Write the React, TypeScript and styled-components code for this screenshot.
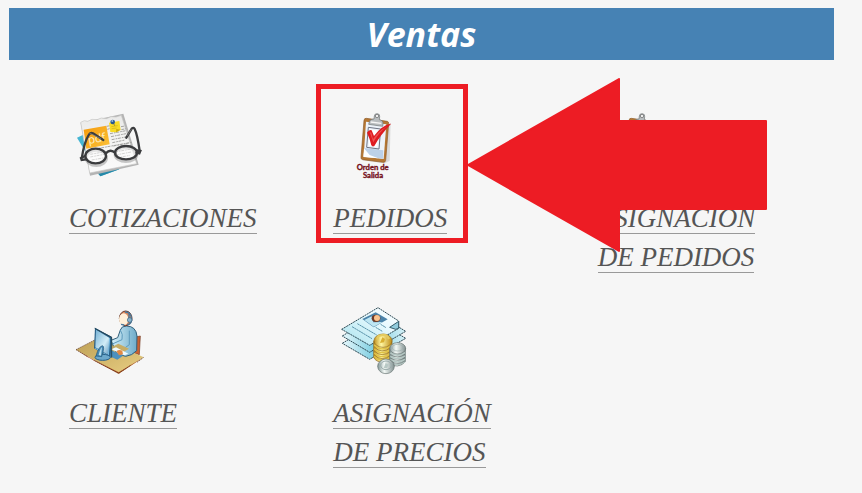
import React from "react";
import styled, { createGlobalStyle } from "styled-components";

const GlobalStyle = createGlobalStyle`
  body {
    margin: 0;
    background: #f6f6f6;
  }
`;

const Page = styled.main`
  padding: 8px 28px 16px 9px;
`;

const Banner = styled.h1`
  margin: 0;
  background: #4682b4;
  color: #fff;
  font: italic bold 34px/52px "Trebuchet MS", "Open Sans", sans-serif;
  text-align: center;
`;

const Menu = styled.nav`
  display: grid;
  grid-template-columns: repeat(3, minmax(0, 1fr));
  gap: 26px 72px;
  padding: 48px 44px 0 60px;
`;

const Item = styled.div<{ $raised?: boolean }>`
  position: relative;
  z-index: ${(p) => (p.$raised ? 1 : 0)};
`;

const Picture = styled.svg`
  display: block;
  width: 80px;
  height: 72px;
  margin-bottom: 19px;
`;

const MenuLink = styled.a`
  color: #555;
  font: italic 27px/39px Georgia, "Liberation Serif", serif;
  text-decoration: none;
  border-bottom: 1px solid #999;
`;

const Frame = styled.div`
  position: absolute;
  top: -24px;
  left: -17px;
  box-sizing: border-box;
  width: 152px;
  height: 159px;
  border: 5px solid #ed1c24;
  pointer-events: none;
`;

const Arrow = styled.svg`
  position: absolute;
  top: -30px;
  left: 134px;
  width: 300px;
  height: 174px;
  pointer-events: none;
`;

function QuoteIcon() {
  return (
    <Picture viewBox="27 24 240 216" aria-hidden="true">
      <defs>
        <linearGradient id="note" x1="0" y1="0" x2="1" y2="1">
          <stop offset="0" stopColor="#f59a0b" />
          <stop offset="1" stopColor="#fbc23a" />
        </linearGradient>
        <linearGradient id="sheet" x1="0" y1="0" x2="0" y2="1">
          <stop offset="0" stopColor="#e9e9e8" />
          <stop offset="0.4" stopColor="#f3f3f2" />
          <stop offset="1" stopColor="#fbfbfb" />
        </linearGradient>
      </defs>
      <path d="M51 113l17-8 110 103-57 21z" fill="#45b5d3" />
      <path d="M121 229l57-21-40-3-29 10z" fill="#2588a8" />
      <path d="M62 69l128-28 46 153-146 33z" fill="#b4b4b4" />
      <path d="M62 67l11-5 10 2 13-6 15 1 13-5 15 2 14-6 15 1 16-5 46 145-141 28z" fill="url(#sheet)" stroke="#c6c6c4" strokeWidth="2" />
      <g stroke="#a4a4a2" strokeWidth="3" strokeDasharray="9 3 5 2">
        <path d="M140 79l10-2M142 88l7-2M183 80l12-2M184 89l14-3M150 101l48-9M153 110l45-9M155 119l47-9M157 128l38-8M160 138l47-9M105 147l110-20M91 163l50-9M91 171l47-9M95 180l40-7M165 156l48-9M167 165l47-9M170 174l39-8" />
      </g>
      <path d="M71 89l68-12 10 56-70 13z" fill="url(#note)" />
      <text x="86" y="132" transform="rotate(-10 86 132)" fill="#fff3cc" fontFamily="Open Sans, sans-serif" fontSize="34">pdf</text>
      <path d="M147 68l31-5 4 27-13 7-18-1z" fill="#f8dc24" />
      <path d="M181 89l-13 8 1-10z" fill="#c9a710" />
      <path d="M154 80l19-3M155 86l15-2" stroke="#cfae17" strokeWidth="2" />
      <circle cx="158" cy="66" r="7" fill="#265892" />
      <circle cx="157" cy="63" r="3" fill="#92b9db" />
      <path d="M161 71l3 6" stroke="#555" strokeWidth="2" />
      <g fill="none" stroke="#77777766" strokeWidth="8">
        <ellipse cx="109" cy="174" rx="31" ry="23" />
        <ellipse cx="198" cy="164" rx="33" ry="21" />
      </g>
      <g fill="#ffffff88" stroke="#3b3c3e" strokeWidth="7" strokeLinecap="round">
        <ellipse cx="107" cy="168" rx="31" ry="22" />
        <ellipse cx="198" cy="158" rx="33" ry="20" />
        <path d="M138 160q13-15 28-1M75 168l-12 6 2 6 13-2M230 151l11 2-3 7-9-2" fill="none" />
        <path d="M66 171q6-42 20-66 4-8 13-5l31 20M239 153q-7-50-15-66-3-6-9-1l-16 27" fill="none" />
      </g>
      <path d="M88 99l35 17M214 88l-13 20" stroke="#8a8a8a" strokeWidth="2" />
    </Picture>
  );
}

function OrderIcon() {
  return (
    <Picture viewBox="10 24 240 216" aria-hidden="true">
      <path d="M99 181l66 9 15-8 2-85 1-29-65 76z" fill="#bdbdbd" opacity="0.5" />
      <path d="M110 55l63 9q4 1 4 6l-9 111q-1 7-8 6l-61-8q-6-1-5-7l9-111q1-7 7-6z" fill="#b47734" stroke="#8e5b28" strokeWidth="2" />
      <path d="M109 65l61 8-8 104-60-7z" fill="#edf3fa" />
      <path d="M104 144l57 7-1 25-58-7z" fill="#bcd1e9" />
      <path d="M101 171l2-26 17 20 26 10z" fill="#fff" />
      <path d="M116 82l37 5-5 60-37-5z" fill="none" stroke="#6d7483" strokeWidth="3" />
      <path d="M121 88l26 4-4 48-26-3z" fill="#fff" />
      <path d="M119 66q2-10 14-9l1-9q1-8 9-7 8 1 7 9l-1 9q12 2 11 13l-1 7-42-6z" fill="#b8bcbe" stroke="#6d7274" strokeWidth="2" />
      <circle cx="142" cy="48" r="5" fill="#eee" stroke="#666" strokeWidth="2" />
      <path d="M123 66l32 4" stroke="#f6f6f6" strokeWidth="4" />
      <path d="M112 98q6-10 14-7l7 17q22-31 49-37 3 0 1 2-30 31-49 65-6 3-9-2-3-17-13-38z" fill="#df1c21" />
      <path d="M120 96l11 31q18-32 42-48-28 15-43 39l-5-20z" fill="#f36868" opacity="0.7" />
      <g fill="#740f19" stroke="#740f19" strokeWidth="1" fontFamily="Lato, sans-serif" fontSize="23" fontWeight="700" textAnchor="middle">
        <text x="129" y="210">Orden de</text>
        <text x="130" y="234">Salida</text>
      </g>
    </Picture>
  );
}

function ClientIcon() {
  return (
    <Picture viewBox="27 24 240 216" aria-hidden="true">
      <defs>
        <linearGradient id="desk" x1="0" y1="0" x2="1" y2="1">
          <stop offset="0" stopColor="#bd9f55" />
          <stop offset="1" stopColor="#e9cf83" />
        </linearGradient>
        <linearGradient id="shirt">
          <stop offset="0" stopColor="#d6f1fa" />
          <stop offset="1" stopColor="#6eabc9" />
        </linearGradient>
        <linearGradient id="screen" x1="0" y1="0" x2="1" y2="1">
          <stop offset="0" stopColor="#75b1d5" />
          <stop offset="0.6" stopColor="#d2edf7" />
          <stop offset="1" stopColor="#5b94bc" />
        </linearGradient>
      </defs>
      <path d="M226 126l15-3-3 56-16-5z" fill="#ca6131" stroke="#713923" strokeWidth="2" />
      <path d="M48 164l73-37 130 60-75 49z" fill="url(#desk)" />
      <path d="M48 164l34 20 8 4 13 8 73 36 75-45-75 49-73-38-13-8-8-4z" fill="#a54a22" />
      <path d="M48 164l34 20M103 196l73 39 37-25M231 202l20-15M48 164l60-31" fill="none" stroke="#5e3725" strokeWidth="2" strokeDasharray="5 2" />
      <path d="M153 136l20-8 8-23q3-12 18-12 29 0 32 30l-1 44q-14 15-33 17l-27-8z" fill="url(#shirt)" stroke="#315f7a" strokeWidth="3" />
      <path d="M181 105q9 13 5 29l-31 14M208 107v42l-18 13" fill="none" stroke="#5d9abc" strokeWidth="3" />
      <path d="M157 155l18-9 32 15-25 15z" fill="#c7ad66" />
      <path d="M151 164l38 18-17 12-30-14z" fill="#4c91be" />
      <path d="M154 163l39 18 12-5-37-19z" fill="#f0fbff" />
      <path d="M169 169q8-7 18-2l2 11-12 3z" fill="#e28944" />
      <ellipse cx="197" cy="70" rx="19" ry="22" fill="#de895b" stroke="#663729" strokeWidth="3" />
      <ellipse cx="191" cy="73" rx="14" ry="18" fill="#fff0d9" />
      <path d="M195 51q20 0 20 25-3 13-14 12M183 88l10 2M207 53v29" fill="none" stroke="#4c799a" strokeWidth="4" />
      <circle cx="209" cy="75" r="7" fill="#89b3cb" stroke="#376281" strokeWidth="2" />
      <path d="M105 98l51 28-5 63-49-29z" fill="#285f87" />
      <path d="M108 104l41 25-4 51-39-23z" fill="url(#screen)" />
      <path d="M104 100l51 27v61" fill="none" stroke="#244555" strokeWidth="3" />
      <path d="M149 130l-4 53-40-24" fill="none" stroke="#79bde3" strokeWidth="3" />
      <ellipse cx="128" cy="187" rx="23" ry="9" fill="#6ca8cb" stroke="#27608a" strokeWidth="3" />
      <path d="M108 183q8-30 20-31 7 2-3 33z" fill="#4387b3" stroke="#245779" strokeWidth="2" />
      <path d="M116 180q4-18 10-24l-3 26z" fill="#b8deed" />
    </Picture>
  );
}

function PricesIcon() {
  return (
    <Picture viewBox="10 24 240 216" aria-hidden="true">
      <defs>
        <linearGradient id="paper" x1="0" y1="1" x2="1" y2="0">
          <stop offset="0" stopColor="#a5e0ec" />
          <stop offset="0.65" stopColor="#e9faff" />
          <stop offset="1" stopColor="#fff" />
        </linearGradient>
        <linearGradient id="under">
          <stop offset="0" stopColor="#e8f8fc" />
          <stop offset="0.5" stopColor="#7ccde0" />
          <stop offset="1" stopColor="#d7f2f8" />
        </linearGradient>
        <linearGradient id="gold">
          <stop offset="0" stopColor="#c09120" />
          <stop offset="0.4" stopColor="#fff7a2" />
          <stop offset="1" stopColor="#bd8c17" />
        </linearGradient>
        <linearGradient id="silver">
          <stop offset="0" stopColor="#829595" />
          <stop offset="0.4" stopColor="#f4faf7" />
          <stop offset="1" stopColor="#829090" />
        </linearGradient>
      </defs>
      <g stroke="#2d4a55" strokeWidth="3" strokeDasharray="6 2">
        <path d="M38 145l107-65 83 50-108 63z" fill="url(#under)" />
        <path d="M38 123l107-65 83 51-108 63z" fill="url(#under)" />
        <path d="M36 103L145 38l62 40v22l-87 51z" fill="url(#paper)" />
      </g>
      <path d="M180 97l27-18v21l-9 3z" fill="#8fcbdc" stroke="#345d6b" strokeWidth="3" />
      <path d="M98 72l40-20 36 21-42 24z" fill="#4b83a9" />
      <path d="M104 75l22-11 5 18 28-1-27 14z" fill="#bee6f3" />
      <ellipse cx="139" cy="70" rx="13" ry="11" fill="#713924" />
      <ellipse cx="142" cy="69" rx="9" ry="9" fill="#fac38d" />
      <g stroke="#5a93aa" strokeWidth="3" strokeDasharray="7 1">
        <path d="M83 86l58 34M67 95l60 36M138 97l20 12M153 88l16 10" />
      </g>
      <g stroke="#91691b" strokeWidth="2" fill="url(#gold)">
        <path d="M132 137v50q6 14 28 15 22-2 27-15v-51" />
        <path d="M134 150q21 23 51 1M134 162q21 22 51 0M134 174q21 22 51 0M134 184q21 22 51 0" fill="none" stroke="#e0c346" strokeWidth="4" />
        <path d="M134 156q21 23 51 1M134 168q21 22 51 0M134 180q21 22 51 0" fill="none" />
        <ellipse cx="160" cy="137" rx="27" ry="20" />
      </g>
      <path d="M144 134q-2-12 10-13 17-5 24 11" fill="none" stroke="#e4cb5f" strokeWidth="7" />
      <path d="M158 127l8 5-3 10-12 2z" fill="#d9af32" />
      <g stroke="#637170" strokeWidth="2" fill="url(#silver)">
        <path d="M180 162v43q8 9 23 8 17-2 24-14v-40" />
        <path d="M182 174q22 14 44-1M182 184q22 14 44-1M182 194q22 14 44-1M184 204q20 11 42-4" fill="none" stroke="#b5c8c4" strokeWidth="4" />
        <path d="M182 179q22 14 44-1M182 189q22 14 44-1M184 199q20 13 42-1" fill="none" />
        <ellipse cx="204" cy="160" rx="24" ry="17" />
        <ellipse cx="169" cy="214" rx="25" ry="22" />
      </g>
      <ellipse cx="204" cy="158" rx="16" ry="10" fill="none" stroke="#9cadad" strokeWidth="2" />
      <ellipse cx="169" cy="211" rx="16" ry="13" fill="none" stroke="#9cadad" strokeWidth="3" />
      <path d="M168 204l9 5-5 10-10 1z" fill="#b8c8c5" />
    </Picture>
  );
}

function Callout() {
  return (
    <>
      <Frame />
      <Arrow viewBox="0 0 300 174" aria-hidden="true">
        <path
          d="M1 87L152 1V43H299V131H152V173Z"
          fill="#ed1c24"
          stroke="#ed1c24"
          strokeWidth="2"
          strokeLinejoin="round"
        />
      </Arrow>
    </>
  );
}

const entries = [
  { label: "COTIZACIONES", Icon: QuoteIcon },
  { label: "PEDIDOS", Icon: OrderIcon, marked: true },
  { label: "ASIGNACIÓN DE PEDIDOS", Icon: OrderIcon },
  { label: "CLIENTE", Icon: ClientIcon },
  { label: "ASIGNACIÓN DE PRECIOS", Icon: PricesIcon },
];

export default function App() {
  return (
    <>
      <GlobalStyle />
      <Page>
        <Banner>Ventas</Banner>
        <Menu aria-label="Ventas">
          {entries.map(({ label, Icon, marked }) => (
            <Item key={label} $raised={marked}>
              <Icon />
              <MenuLink href="#">{label}</MenuLink>
              {marked && <Callout />}
            </Item>
          ))}
        </Menu>
      </Page>
    </>
  );
}
